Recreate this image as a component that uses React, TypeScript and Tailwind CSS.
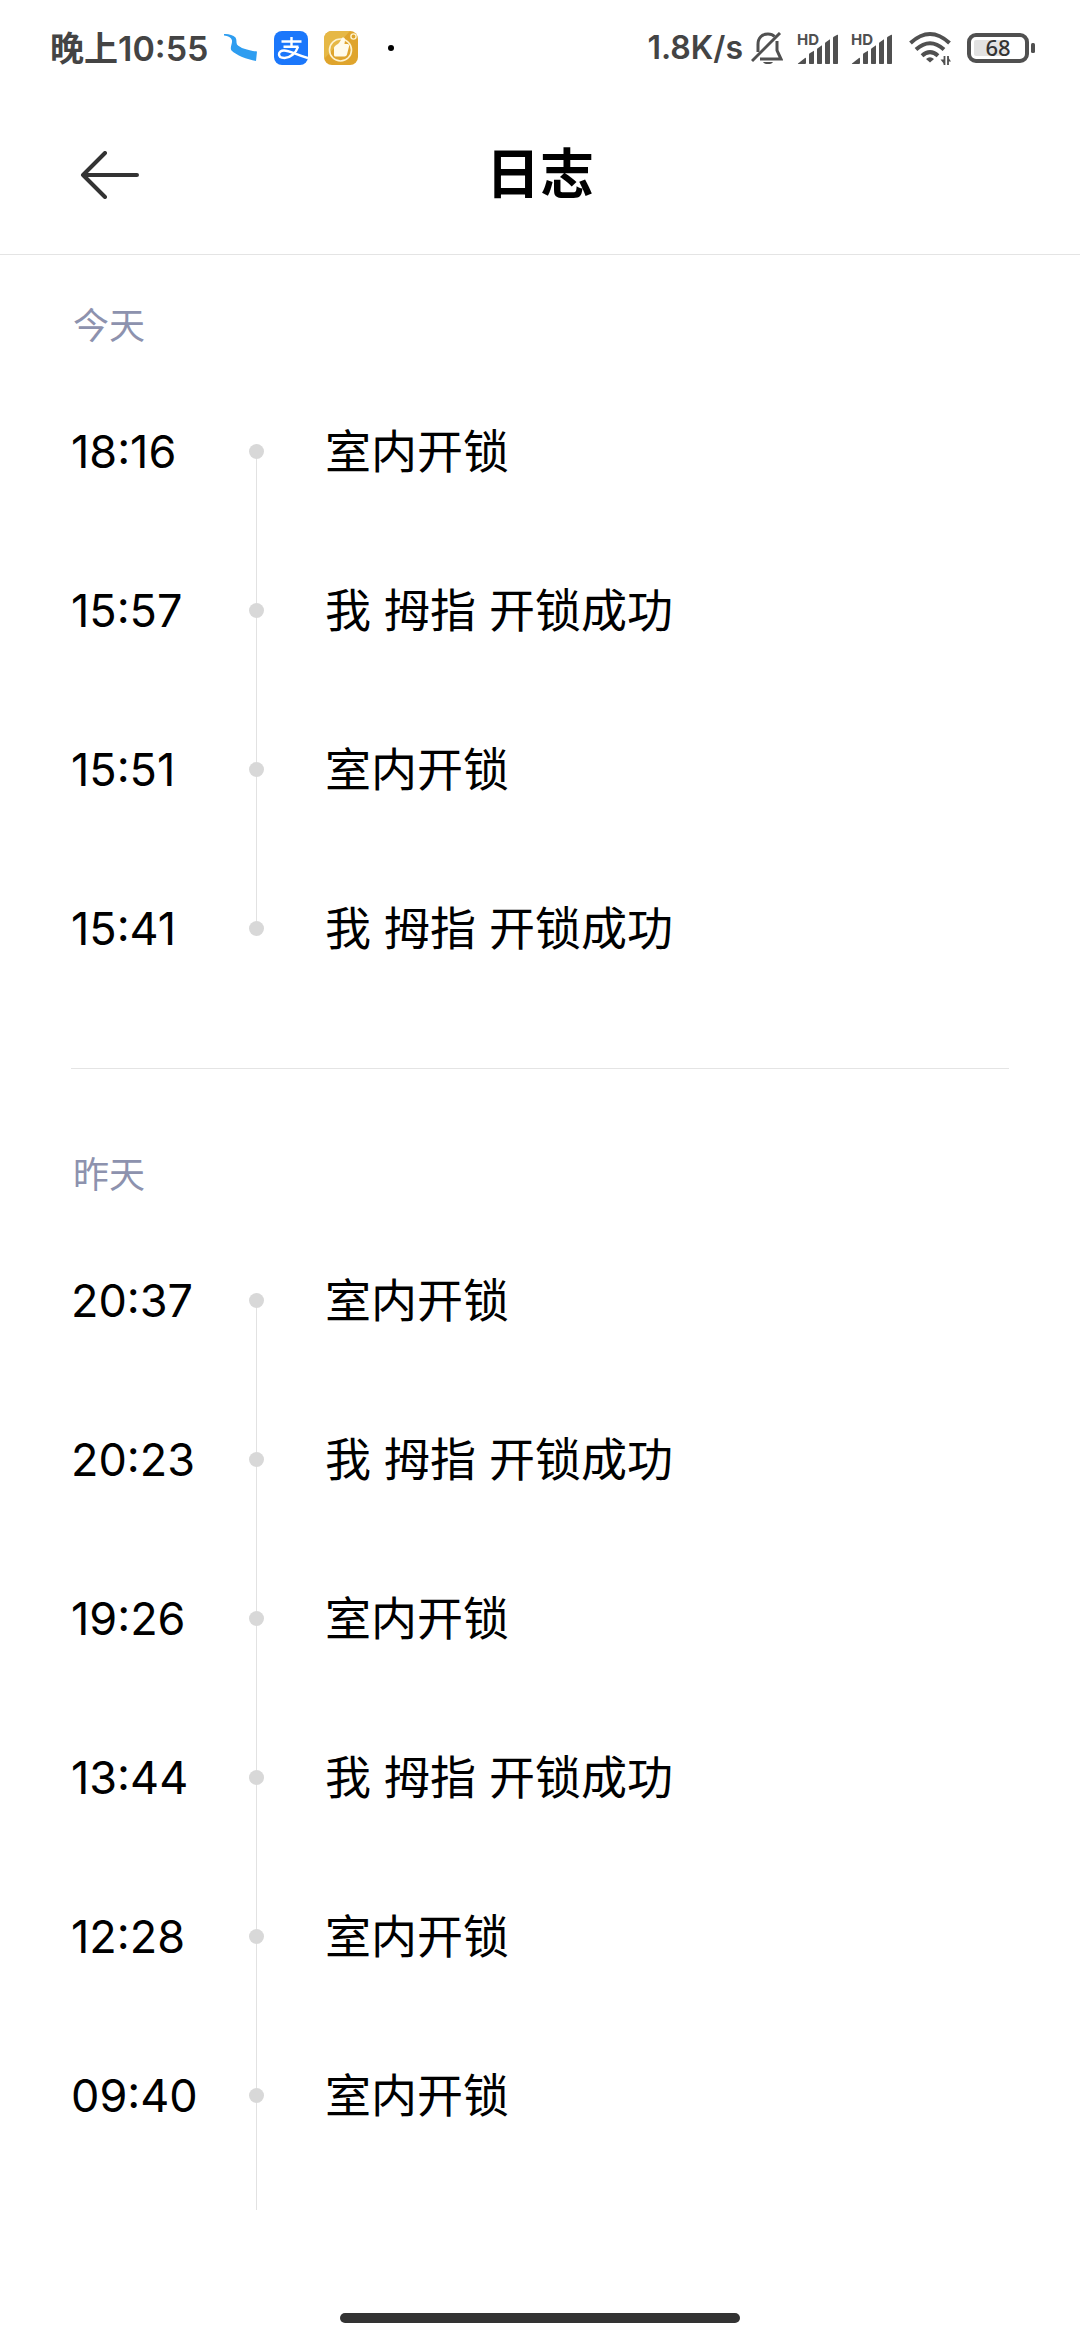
type LogEntry = {
  time: string
  text: string
}

type LogGroup = {
  label: string
  entries: LogEntry[]
  // more entries follow below, so the rail keeps going
  open?: boolean
}

const groups: LogGroup[] = [
  {
    label: '今天',
    entries: [
      { time: '18:16', text: '室内开锁' },
      { time: '15:57', text: '我 拇指 开锁成功' },
      { time: '15:51', text: '室内开锁' },
      { time: '15:41', text: '我 拇指 开锁成功' }
    ]
  },
  {
    label: '昨天',
    open: true,
    entries: [
      { time: '20:37', text: '室内开锁' },
      { time: '20:23', text: '我 拇指 开锁成功' },
      { time: '19:26', text: '室内开锁' },
      { time: '13:44', text: '我 拇指 开锁成功' },
      { time: '12:28', text: '室内开锁' },
      { time: '09:40', text: '室内开锁' }
    ]
  }
]

const BirdIcon = () => (
  <svg className="w-[34px] h-[34px]" viewBox="0 0 34 34">
    <path d="M0 3C4 2.500 9 4 11.500 6.500c1.500 2 .5 5 1.500 7C16 17 24 19.500 33 20.500L32 30C23 28.500 12 24 7.500 19.500 5.500 17 8.500 13 8 9.500 7.500 6.500 4 5 0 4.500z" fill="#2e9df0" />
  </svg>
)

const AlipayIcon = () => (
  <svg className="w-[34px] h-[34px]" viewBox="0 0 34 34">
    <rect width="34" height="34" rx="8" fill="#1b77fb" />
    <g fill="none" stroke="#fff" strokeWidth="2.400">
      <path d="M17.500 6v9.500M7.500 10.500h20M9.500 15.800h15" />
      <path d="M24 15.800C22 22 16 27 10.500 27c-3.500 0-5.500-1.700-5.500-3.700 0-2.300 2.200-3.800 5-3.800 6 0 12 4.500 24 7.500" />
    </g>
  </svg>
)

const ThumbIcon = () => (
  <svg className="w-[34px] h-[34px]" viewBox="0 0 34 34">
    <rect width="34" height="34" rx="8" fill="#dfa42c" />
    <path d="M0 8a8 8 0 0 1 8-8h18L0 28z" fill="#e6b845" />
    <circle cx="16.500" cy="19" r="11" fill="none" stroke="#fdf3d0" strokeWidth="1.600" />
    <path d="M11 15c2-1.500 5-3 6.500-7.500.5-1.500 3.500-1.500 3.500 1 0 2-.5 3.500-.5 4.500h3c1.500 0 2 1.500 1.500 2.500l-2 8c-.4 1.300-1.200 2-2.500 2h-9c-1 0-1.500-.6-1.500-1.500v-7.500z" fill="#fffbea" />
    <circle cx="29.500" cy="5.500" r="2.600" fill="none" stroke="#fdf3d0" strokeWidth="1.400" />
  </svg>
)

const MutedBellIcon = () => (
  <svg className="w-8 h-8" viewBox="0 0 32 32" fill="none" stroke="#505050" strokeWidth="3">
    <path d="M7 20v-7.500C7 6 11 2 17 2c3 0 5 .8 6.500 2.500M26 9v9.500l4 8.500H9" />
    <path d="M29 1 1 29" />
    <path d="M12 30h10c-1 1.700-2.800 2-5 2s-4-.3-5-2z" fill="#505050" stroke="none" />
  </svg>
)

const SignalIcon = () => (
  <svg className="w-[42px] h-9" viewBox="0 -4 42 36" fill="#505050">
    <text x="0" y="11" fontSize="15" fontWeight="700" className="font-['Inter']">HD</text>
    <path d="M1 29.500 8 24q1-.6 1 .5V29q0 1-1 1H1.500q-1 0-.5-.5z" />
    <path d="M12 20.500q0-.8.700-1.200l4.300-2.500V29.300q0 .7-.7.700h-3.600q-.7 0-.7-.7z" />
    <path d="M20 15.500q0-.8.700-1.300l4.300-3V29.300q0 .7-.7.700h-3.600q-.7 0-.7-.7z" />
    <path d="M28 9.500q0-.8.700-1.300l4.300-3V29.300q0 .7-.7.700h-3.600q-.7 0-.7-.7z" />
    <path d="M36 4q0-.8.700-1.300L40.300.8q.7-.4.700.5v28q0 .7-.7.700h-3.600q-.7 0-.7-.7z" />
  </svg>
)

const WifiIcon = () => (
  <svg className="w-[42px] h-[34px]" viewBox="0 -1 42 34" fill="none" stroke="#505050" strokeWidth="4">
    <path d="M1.500 11Q21-7 40.500 11" />
    <path d="M7 17.500Q21 5 35 17.500" />
    <path d="M13 23.700Q21 16.500 29 23.700" />
    <path d="M17 27q4-3.500 8 0L21 30.500z" fill="#505050" stroke="none" />
    <path d="M35.500 24v9M39 33v-9" strokeWidth="1.800" />
    <path d="M31.500 27.500h3.500V32zM42 29.500h-3V25z" fill="#505050" stroke="none" />
  </svg>
)

const BatteryIcon = () => (
  <svg className="w-[68px] h-8" viewBox="0 0 68 32">
    <rect x="7" y="8" width="33" height="16" rx="2" fill="#e2e2e2" />
    <rect x="2" y="3" width="58" height="26" rx="7" fill="none" stroke="#505050" strokeWidth="4" />
    <rect x="64" y="11" width="4" height="10" rx="1.500" fill="#505050" />
    <text x="31" y="24" fontSize="22" fontWeight="500" textAnchor="middle" fill="#333" className="font-['Noto_Sans']">68</text>
  </svg>
)

const StatusBar = () => (
  <div className="flex items-center justify-between h-24 pl-[50px] pr-[45px] font-semibold text-[#444]">
    <div className="flex items-center gap-4">
      <span className="text-[34px]">晚上10:55</span>
      <BirdIcon />
      <AlipayIcon />
      <ThumbIcon />
      <span className="ml-3.5 size-1.5 rounded-full bg-black" />
    </div>
    <div className="flex items-center">
      <span className="mr-2 text-[32px]">1.8K/s</span>
      <MutedBellIcon />
      <div className="flex gap-3 ml-3.5 mr-4">
        <SignalIcon />
        <SignalIcon />
      </div>
      <WifiIcon />
      <div className="ml-4">
        <BatteryIcon />
      </div>
    </div>
  </div>
)

const Header = () => (
  <header className="grid grid-cols-[1fr_auto_1fr] items-center h-[159px] px-[72px] border-b border-[#e4e4e4]">
    <button type="button" aria-label="返回" className="justify-self-start p-2">
      <svg className="w-[60px] h-12" viewBox="0 0 60 48" fill="none" stroke="#333" strokeWidth="4" strokeLinecap="round" strokeLinejoin="round">
        <path d="M25 2 3 24l22 22M3 24h54" />
      </svg>
    </button>
    <h1 className="text-[54px] leading-none font-bold text-black">日志</h1>
  </header>
)

const LogRow = ({ entry, up, down }: { entry: LogEntry, up: boolean, down: boolean }) => (
  <li className="flex items-center h-[159px] text-black">
    <time className="w-[178px] text-[45px]">{entry.time}</time>
    <div className="flex flex-col items-center self-stretch w-[15px]">
      <div className={up ? 'flex-1 w-px bg-[#e2e2e2]' : 'flex-1'} />
      <div className="size-[15px] rounded-full bg-[#d8d8d8]" />
      <div className={down ? 'flex-1 w-px bg-[#e2e2e2]' : 'flex-1'} />
    </div>
    <span className="ml-[61px] text-[46px]">{entry.text}</span>
  </li>
)

const LogSection = ({ group }: { group: LogGroup }) => (
  <section>
    <h2 className="mb-5 pl-0.5 text-[36px] leading-[52px] text-[#8d92ae]">{group.label}</h2>
    <ul>
      {group.entries.map((entry, i) => (
        <LogRow
          key={entry.time}
          entry={entry}
          up={i > 0}
          down={group.open || i < group.entries.length - 1}
        />
      ))}
    </ul>
    {group.open && (
      <div className="flex h-[35px] pl-[178px]">
        <div className="flex justify-center w-[15px]">
          <div className="w-px bg-[#e2e2e2]" />
        </div>
      </div>
    )}
  </section>
)

export default function App() {
  return (
    <div className="flex flex-col min-h-screen bg-white font-['Inter','Noto_Sans_CJK_SC',sans-serif]">
      <StatusBar />
      <Header />
      <main className="flex-1 px-[71px] pt-[45px]">
        <LogSection group={groups[0]} />
        <hr className="mt-[60px] mb-20 border-[#e4e4e4]" />
        <LogSection group={groups[1]} />
      </main>
      <div className="flex justify-center pb-[17px]">
        <div className="w-[37%] h-2.5 rounded-full bg-[#333]" />
      </div>
    </div>
  )
}
